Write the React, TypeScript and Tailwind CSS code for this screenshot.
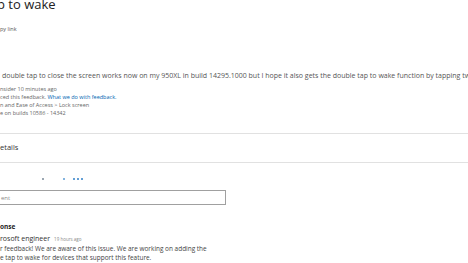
import React from "react";

export default function App() {
  return (
    <div
      className="w-[468px] h-[263px] overflow-hidden bg-white text-[#333]"
      style={{ fontFamily: '"Open Sans", "Noto Sans", sans-serif' }}
    >
      <div className="-mt-[4px] h-[16px] leading-[16px] text-[13px] text-[#222] whitespace-nowrap -ml-[3px]">
        p to wake
      </div>
      <div className="mt-[12px] h-[10px] leading-[10px] text-[5.5px] text-[#555] whitespace-nowrap">
        py link
      </div>
      <div className="mt-[37px] h-[10px] leading-[10px] text-[7px] text-[#555] whitespace-nowrap pl-[2px]">
        double tap to close the screen works now on my 950XL in build 14295.1000 but I hope it also gets the double tap to wake function by tapping twice
      </div>
      <div className="mt-[4px] text-[5.5px] text-[#666] whitespace-nowrap">
        <div className="h-[8px] leading-[8px]">nsider 10 minutes ago</div>
        <div className="h-[8px] leading-[8px]">
          ced this feedback. <span className="text-[#0063b1]">What we do with feedback.</span>
        </div>
        <div className="h-[8px] leading-[8px]">n and Ease of Access &gt; Lock screen</div>
        <div className="h-[8px] leading-[8px]">e on builds 10586 - 14342</div>
      </div>
      <div className="mt-[16px] h-px bg-[#e1e1e1]" />
      <div className="mt-[8px] h-[10px] leading-[10px] text-[7.5px] text-[#333] whitespace-nowrap">
        etails
      </div>
      <div className="mt-[10px] h-px bg-[#e1e1e1]" />
      <div className="mt-[12px] h-[8px] flex items-center">
        <div className="ml-[42px] w-[2px] h-[2px] rounded-full bg-[#7a8a99]" />
        <div className="ml-[19px] w-[2px] h-[2px] rounded-full bg-[#5b9bd5]" />
        <div className="ml-[8px] flex gap-[2px]">
          <div className="w-[2px] h-[2px] rounded-full bg-[#2f7fc8]" />
          <div className="w-[2px] h-[2px] rounded-full bg-[#2f7fc8]" />
          <div className="w-[2px] h-[2px] rounded-full bg-[#2f7fc8]" />
        </div>
      </div>
      <div className="mt-[7px] w-[230px] -ml-[4px] h-[15px] border border-[#a0a0a0] flex items-center pl-[4px]">
        <span className="text-[6px] text-[#888] leading-none">ent</span>
      </div>
      <div className="mt-[17px] h-[10px] leading-[10px] text-[6.5px] font-bold text-[#222] whitespace-nowrap">
        onse
      </div>
      <div className="mt-[2px] h-[10px] leading-[10px] whitespace-nowrap flex items-baseline">
        <span className="text-[7px] text-[#333]">rosoft engineer</span>
        <span className="ml-[4px] text-[4.5px] text-[#888]">19 hours ago</span>
      </div>
      <div className="mt-[1px] text-[6.45px] text-[#444] whitespace-nowrap">
        <div className="h-[8px] leading-[8px]">r feedback! We are aware of this issue. We are working on adding the</div>
        <div className="mt-[1px] h-[8px] leading-[8px]">e tap to wake for devices that support this feature.</div>
      </div>
    </div>
  );
}
